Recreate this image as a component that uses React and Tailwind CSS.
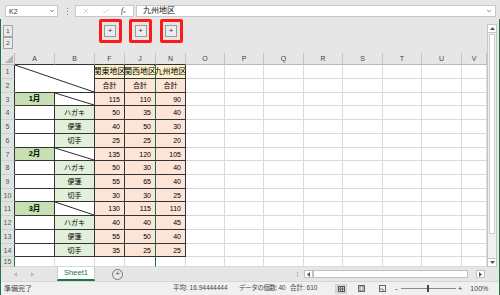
import React from 'react'
import { X, Check, ChevronDown } from 'lucide-react'

const LETTERS = ['A', 'B', 'F', 'J', 'N', 'O', 'P', 'Q', 'R', 'S', 'T', 'U', 'V']

const MONTHS = [
  { m: '1月', total: [115, 110, 90], items: [['ハガキ', 50, 35, 40], ['便箋', 40, 50, 30], ['切手', 25, 25, 20]] },
  { m: '2月', total: [135, 120, 105], items: [['ハガキ', 50, 30, 40], ['便箋', 55, 65, 40], ['切手', 30, 30, 25]] },
  { m: '3月', total: [130, 115, 110], items: [['ハガキ', 40, 40, 45], ['便箋', 55, 50, 40], ['切手', 35, 25, 25]] },
]

function Diag() {
  return (
    <svg className="absolute inset-0 w-full h-full" viewBox="0 0 100 100" preserveAspectRatio="none">
      <line x1="0" y1="0" x2="100" y2="100" stroke="#2b2b2b" strokeWidth="1" vectorEffect="non-scaling-stroke" />
    </svg>
  )
}

function FormulaBar() {
  return (
    <div className="h-[19px] shrink-0 flex items-start pt-[5px]">
      <div className="ml-[5px] w-[53px] h-[12px] bg-white border border-[#c8c8c8] flex items-center justify-between pl-[3px] pr-[2px]">
        <span className="text-[7px] text-[#333]">K2</span>
        <ChevronDown size={6} strokeWidth={3} className="text-[#444]" />
      </div>
      <div className="ml-[9px] h-[12px] flex flex-col justify-center gap-[2px]">
        <span className="w-[1px] h-[1px] bg-[#8a8a8a]" />
        <span className="w-[1px] h-[1px] bg-[#8a8a8a]" />
        <span className="w-[1px] h-[1px] bg-[#8a8a8a]" />
      </div>
      <div className="ml-[7px] w-[59px] h-[12px] bg-white border border-[#c8c8c8] flex items-center">
        <X size={8} strokeWidth={1.5} className="ml-[6px] text-[#a6a6a6]" />
        <Check size={8} strokeWidth={1.5} className="ml-[12px] text-[#a6a6a6]" />
        <span className="ml-[11px] text-[8px] italic font-['Liberation_Serif',serif] text-[#333]">f<span className="text-[5px]">x</span></span>
      </div>
      <div className="ml-[2px] w-[360px] h-[12px] bg-white border border-[#c8c8c8] flex items-center pl-[6px] pr-[3px]">
        <span className="text-[8px] text-[#111]">九州地区</span>
        <ChevronDown size={6} strokeWidth={3} className="ml-auto text-[#555]" />
      </div>
    </div>
  )
}

function LevelBtn({ children }) {
  return (
    <div className="w-[10px] h-[12px] border border-[#a5a5a5] bg-[#e9e9e9] flex items-center justify-center text-[6px] text-[#444]">
      {children}
    </div>
  )
}

function PlusBox() {
  return (
    <div className="w-[23px] h-[24px] border-[3px] border-[#ff1a1a] rounded-[2px] flex items-center justify-center">
      <div className="w-[12px] h-[12px] border border-[#9a9a9a] bg-[#ececec] flex items-center justify-center text-[8px] leading-none text-[#333]">+</div>
    </div>
  )
}

function OutlineBar() {
  return (
    <div className="h-[34px] shrink-0 flex">
      <div className="w-[14px] pl-[2px] pt-[6px] flex flex-col">
        <LevelBtn>1</LevelBtn>
        <LevelBtn>2</LevelBtn>
      </div>
      <div className="w-[80px]" />
      <div className="w-[30px] flex justify-center"><PlusBox /></div>
      <div className="w-[31px] flex justify-center"><PlusBox /></div>
      <div className="w-[30px] flex justify-center"><PlusBox /></div>
    </div>
  )
}

function buildRows() {
  const rows = []
  rows.push([null, null, { text: '関東地区', bg: 'yellow', center: true, clip: true }, { text: '関西地区', bg: 'yellow', center: true, clip: true }, { text: '九州地区', bg: 'yellow', center: true, clip: true }])
  rows.push([null, null, { text: '合計', bg: 'peach', center: true }, { text: '合計', bg: 'peach', center: true }, { text: '合計', bg: 'peach', center: true }])
  MONTHS.forEach((mo) => {
    rows.push([
      { text: mo.m, bg: 'green', center: true, bold: true },
      { diag: true },
      ...mo.total.map((v) => ({ text: v, bg: 'peach' })),
    ])
    mo.items.forEach((it) => {
      rows.push([
        {},
        { text: it[0], bg: 'lgreen', center: true },
        ...it.slice(1).map((v) => ({ text: v, bg: 'peach' })),
      ])
    })
  })
  return rows
}

const BG = {
  yellow: 'bg-[#fff2cc]',
  peach: 'bg-[#fce4d6]',
  green: 'bg-[#c6e0b4]',
  lgreen: 'bg-[#e2efda]',
}

function Sheet() {
  const rows = buildRows()
  const cells = []

  // header row
  cells.push(
    <div key="corner" className="bg-[#e6e6e6] border-r border-b border-[#b8b8b8] relative">
      <svg className="absolute right-[1px] bottom-[1px]" width="8" height="8" viewBox="0 0 8 8">
        <polygon points="8,0 8,8 0,8" fill="#b4b4b4" />
      </svg>
    </div>
  )
  LETTERS.forEach((l, c) => {
    cells.push(
      <div
        key={'h' + l}
        className={
          'bg-[#e6e6e6] border-r border-r-[#c4c4c4] border-b flex items-center justify-center text-[7px] text-[#444] ' +
          (c <= 4 ? 'border-b-[#333]' : 'border-b-[#b8b8b8]')
        }
      >
        {l}
      </div>
    )
  })

  for (let r = 1; r <= 15; r++) {
    cells.push(
      <div
        key={'r' + r}
        className={
          'bg-[#e2e2e2] border-b border-b-[#cfcfcf] border-r flex items-center justify-center text-[7px] text-[#2f6b4b] ' +
          (r <= 14 ? 'border-r-[#333]' : 'border-r-[#217346]')
        }
      >
        {r}
      </div>
    )
    const data = rows[r - 1] || []
    for (let c = 0; c < 13; c++) {
      if (r === 1 && c === 0) {
        cells.push(
          <div key="merged" className="col-span-2 row-span-2 bg-white border-r border-b border-[#333] relative">
            <Diag />
          </div>
        )
        continue
      }
      if ((r === 1 || r === 2) && c <= 1) continue
      const d = data[c]
      const dark = r <= 14 && c <= 4
      let cls = 'relative border-r border-b flex items-center text-black '
      cls += dark ? 'border-b-[#333] ' : 'border-b-[#dadada] '
      if (c === 3) cls += 'border-r-[#217346] '
      else if (dark) cls += 'border-r-[#333] '
      else cls += 'border-r-[#dadada] '
      cls += d && d.bg ? BG[d.bg] + ' ' : 'bg-white '
      if (d && d.center) cls += 'justify-center '
      else cls += 'justify-end pr-[4px] '
      if (d && d.bold) cls += 'font-bold text-[7.5px] '
      else if (d && d.clip) cls += 'overflow-hidden whitespace-nowrap text-[8px] '
      else cls += 'text-[7px] '
      cells.push(
        <div key={r + '-' + c} className={cls}>
          {d && d.diag && <Diag />}
          {d && d.text !== undefined && <span className="shrink-0">{d.text}</span>}
          {r === 1 && c === 3 && <span className="absolute right-[-2px] top-[-2px] w-[3px] h-[3px] bg-[#217346]" />}
        </div>
      )
    }
  }

  return (
    <div className="grid grid-cols-[14px_40px_40px_30px_31px_30px_39px_39px_40px_39px_40px_39px_40px_25px] grid-rows-[12px_14px_14px_13px_14px_14px_14px_13px_14px_14px_13px_14px_14px_14px_13px_10px] overflow-hidden">
      {cells}
    </div>
  )
}

function VScroll() {
  return (
    <div className="w-[10px] pt-[5px] flex flex-col">
      <div className="h-[9px] border border-[#c6c6c6] bg-white flex items-center justify-center">
        <svg width="5" height="3" viewBox="0 0 5 3"><polygon points="2.5,0 5,3 0,3" fill="#555" /></svg>
      </div>
      <div className="flex-1 border-x border-[#c6c6c6] bg-[#f0f0f0] flex justify-center py-[1px]">
        <div className="w-[6px] h-[200px] bg-white border border-[#cdcdcd]" />
      </div>
      <div className="h-[9px] border border-[#c6c6c6] bg-white flex items-center justify-center">
        <svg width="5" height="3" viewBox="0 0 5 3"><polygon points="0,0 5,0 2.5,3" fill="#555" /></svg>
      </div>
    </div>
  )
}

function TabBar() {
  return (
    <div className="h-[14px] shrink-0 flex items-stretch">
      <div className="w-[56px] flex items-center">
        <svg className="ml-[13px]" width="3" height="5" viewBox="0 0 3 5"><polygon points="3,0 3,5 0,2.5" fill="#b8b8b8" /></svg>
        <svg className="ml-[14px]" width="3" height="5" viewBox="0 0 3 5"><polygon points="0,0 3,2.5 0,5" fill="#b8b8b8" /></svg>
      </div>
      <div className="w-[38px] bg-white border-x border-[#c8c8c8] border-b-2 border-b-[#217346] flex items-center justify-center text-[7.5px] text-[#217346]">
        Sheet1
      </div>
      <div className="ml-[17px] flex items-center">
        <div className="w-[11px] h-[11px] rounded-full border border-[#777] flex items-center justify-center text-[8px] leading-none text-[#555]">+</div>
      </div>
      <div className="ml-[174px] flex items-center">
        <div className="flex flex-col gap-[1px]">
          <span className="w-[1px] h-[1px] bg-[#999]" />
          <span className="w-[1px] h-[1px] bg-[#999]" />
          <span className="w-[1px] h-[1px] bg-[#999]" />
        </div>
      </div>
      <div className="ml-[6px] flex items-center">
        <div className="w-[9px] h-[8px] border border-[#c0c0c0] bg-white flex items-center justify-center">
          <svg width="3" height="5" viewBox="0 0 3 5"><polygon points="3,0 3,5 0,2.5" fill="#555" /></svg>
        </div>
        <div className="w-[155px] h-[8px] border border-[#c0c0c0] bg-white" />
        <div className="w-[8px] h-[8px] bg-[#e6e6e6]" />
        <div className="w-[9px] h-[8px] border border-[#c0c0c0] bg-white flex items-center justify-center">
          <svg width="3" height="5" viewBox="0 0 3 5"><polygon points="0,0 3,2.5 0,5" fill="#555" /></svg>
        </div>
      </div>
    </div>
  )
}

function StatusBar() {
  return (
    <div className="h-[14px] shrink-0 bg-[#f0f0f0] border-t border-[#d6d6d6] flex items-center text-[7px] text-[#444] whitespace-nowrap">
      <div className="w-[172px] pl-[3px]">準備完了</div>
      <div className="w-[66px] text-[6.5px]">平均: 16.94444444</div>
      <div className="w-[51px] text-[6.5px] tracking-[-0.4px]">データの個数: 40</div>
      <div className="w-[45px] text-[6.5px]">合計: 610</div>
      <div className="w-[12px] h-[10px] bg-[#d4d4d4] flex items-center justify-center">
        <svg width="7" height="6" viewBox="0 0 7 6">
          <rect x="0.5" y="0.5" width="6" height="5" fill="none" stroke="#555" strokeWidth="1" />
          <line x1="2.5" y1="0" x2="2.5" y2="6" stroke="#555" strokeWidth="0.8" />
          <line x1="4.5" y1="0" x2="4.5" y2="6" stroke="#555" strokeWidth="0.8" />
          <line x1="0" y1="3" x2="7" y2="3" stroke="#555" strokeWidth="0.8" />
        </svg>
      </div>
      <div className="ml-[9px] w-[10px] flex justify-center">
        <svg width="7" height="7" viewBox="0 0 7 7">
          <rect x="0.5" y="0.5" width="6" height="6" fill="none" stroke="#666" strokeWidth="1" />
          <rect x="2" y="1" width="3" height="5" fill="none" stroke="#666" strokeWidth="0.8" />
        </svg>
      </div>
      <div className="ml-[11px] w-[10px] flex justify-center">
        <svg width="7" height="7" viewBox="0 0 7 7">
          <rect x="0.5" y="0.5" width="6" height="6" fill="none" stroke="#666" strokeWidth="1" />
          <line x1="0.5" y1="4" x2="4" y2="4" stroke="#666" strokeWidth="0.8" />
          <line x1="4" y1="4" x2="4" y2="6.5" stroke="#666" strokeWidth="0.8" />
        </svg>
      </div>
      <div className="ml-[8px] text-[8px] text-[#444]">-</div>
      <div className="ml-[3px] w-[55px] h-[1px] bg-[#888] relative">
        <span className="absolute left-[26px] top-[-3px] w-[2px] h-[7px] bg-[#444]" />
      </div>
      <div className="ml-[2px] text-[8px] text-[#444]">+</div>
      <div className="ml-[8px]">100%</div>
    </div>
  )
}

export default function App() {
  return (
    <div className="w-[500px] h-[295px] bg-[#e6e6e6] overflow-hidden flex flex-col font-['Liberation_Sans','Noto_Sans_CJK_JP',sans-serif] leading-none">
      <FormulaBar />
      <div className="flex-1 flex flex-col border-x border-[#217346]">
        <div className="h-[248px] flex">
          <div className="w-[486px] flex flex-col">
            <OutlineBar />
            <Sheet />
          </div>
          <VScroll />
        </div>
        <TabBar />
        <StatusBar />
      </div>
    </div>
  )
}
